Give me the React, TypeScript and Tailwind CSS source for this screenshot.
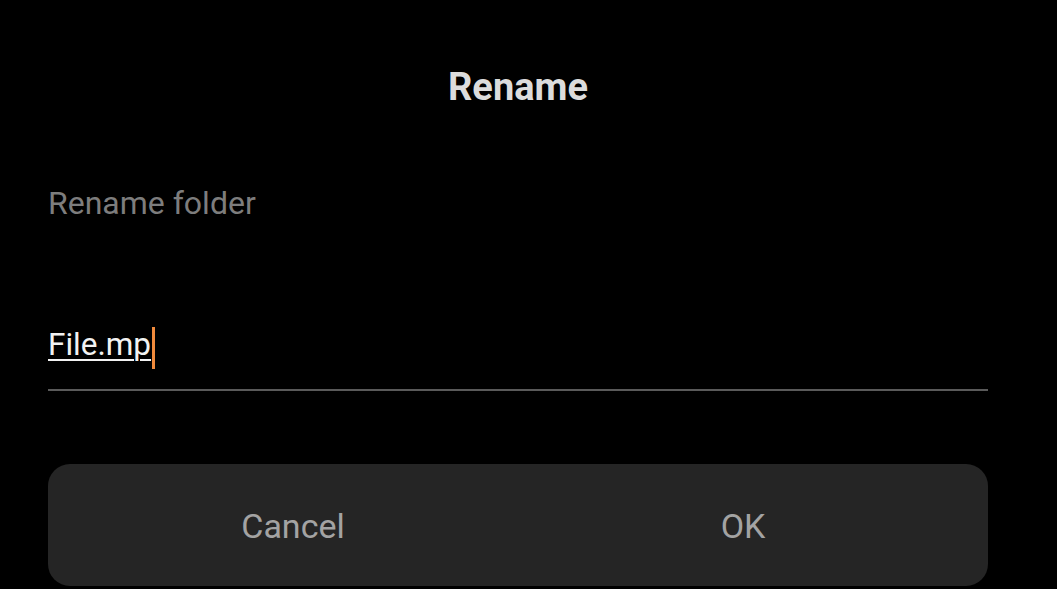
import React, { useState } from 'react';

const App: React.FC = () => {
  const [name] = useState('File.mp');

  return (
    <div className="w-[1057px] h-[589px] bg-black overflow-hidden font-['Roboto',sans-serif]">
      <div className="flex flex-col pl-[48px] pr-[69px]">
        <h1 className="mt-[62px] h-[50px] text-center text-[38px] leading-[50px] font-bold text-[#dcdcdc]">
          Rename
        </h1>

        <p className="mt-[76px] text-[32px] leading-[30px] text-[#7d7d7d]">Rename folder</p>

        {/* Input */}
        <div className="mt-[109px] flex items-end border-b-2 border-[#5a5a5a] pb-[26px]">
          <span className="text-[31.5px] leading-[36px] text-[#f2f2f2] underline decoration-2 underline-offset-[4px]">
            {name}
          </span>
          <span className="ml-[1px] mb-[-6px] w-[3px] h-[42px] bg-[#f08a3c]" />
        </div>

        {/* Buttons */}
        <div className="mt-[73px] flex h-[122px] rounded-[22px] bg-[#252525] px-[20px]">
          <button className="flex-1 flex items-center justify-center pt-[3px] text-[34px] text-[#a3a3a3]">Cancel</button>
          <button className="flex-1 flex items-center justify-center pt-[3px] text-[34px] text-[#a3a3a3]">OK</button>
        </div>
      </div>
    </div>
  );
};

export default App;
